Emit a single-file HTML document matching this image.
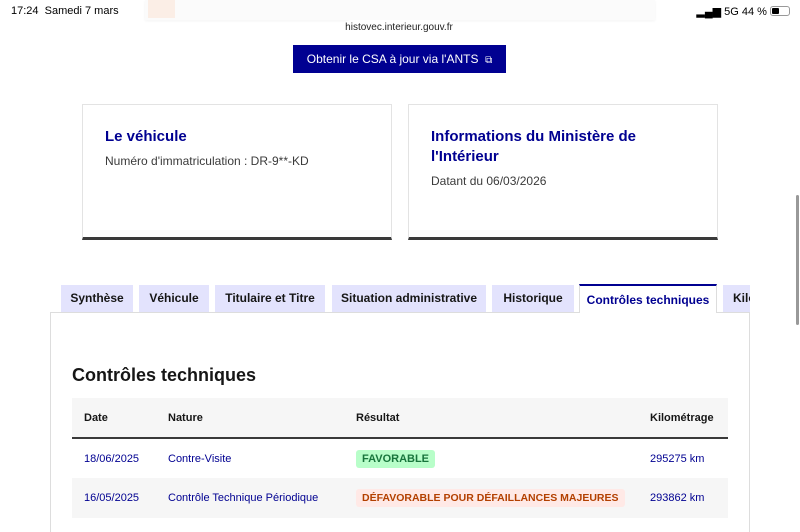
<!DOCTYPE html><html><head><meta charset="utf-8"><style>
body{margin:0;width:800px;height:525px;overflow:hidden;background:#fff;font-family:"Liberation Sans",sans-serif;position:relative;color:#161616}
.a{position:absolute}
.card{position:absolute;top:104px;height:136px;border:1px solid #e3e3e3;border-bottom:3px solid #3a3a3a;box-sizing:border-box;background:#fff}
.card h3{margin:0;position:absolute;left:22px;top:22px;color:#000091;font-size:15px;font-weight:bold;line-height:20px}
.card p{margin:0;position:absolute;left:22px;font-size:12px;color:#3a3a3a}
.tab{position:absolute;top:285px;height:27px;background:#e3e3fd;font-size:12px;font-weight:bold;line-height:27px;text-align:center;color:#161616}
.c{position:absolute;font-size:11px;white-space:nowrap;line-height:14px}
.h{font-weight:bold;color:#161616}
.v{color:#000091}
.b{font-weight:bold;padding:2px 6px;border-radius:3px;margin-top:-2px}
</style></head><body>
<div class="a" style="left:145px;top:0;width:510px;height:20px;background:#fbfbfb;box-shadow:0 1px 3px rgba(0,0,0,.05)"></div>
<div class="a" style="left:148px;top:0;width:27px;height:18px;background:#fbeee6"></div>
<div class="a" style="left:11px;top:5px;font-size:11px;color:#000">17:24&nbsp;&nbsp;Samedi 7 mars</div>
<div class="a" style="right:10px;top:5px;font-size:11px;color:#000">▂▄▆ 5G 44 % <span style="display:inline-block;width:18px;height:8px;border:1px solid #999;border-radius:3px;vertical-align:-1px;position:relative"><span style="position:absolute;left:1px;top:1px;width:7px;height:6px;background:#000;border-radius:1px"></span></span></div>
<div class="a" style="left:343px;top:20px;width:112px;height:16px;background:#fff;border-radius:8px;font-size:10px;line-height:16px;text-align:center;color:#222">histovec.interieur.gouv.fr</div>
<div class="a" style="left:293px;top:45px;width:213px;height:28px;background:#000091;color:#fff;font-size:12px;line-height:28px;text-align:center">Obtenir le CSA à jour via l'ANTS&nbsp; <span style="font-size:10px">⧉</span></div>
<div class="card" style="left:82px;width:310px"><h3>Le véhicule</h3><p style="top:49px">Numéro d'immatriculation : DR-9**-KD</p></div>
<div class="card" style="left:408px;width:310px"><h3>Informations du Ministère de<br>l'Intérieur</h3><p style="top:69px">Datant du 06/03/2026</p></div>
<div class="tab" style="left:61px;width:72px">Synthèse</div>
<div class="tab" style="left:139px;width:70px">Véhicule</div>
<div class="tab" style="left:215px;width:110px">Titulaire et Titre</div>
<div class="tab" style="left:332px;width:154px">Situation administrative</div>
<div class="tab" style="left:492px;width:82px">Historique</div>
<div class="tab" style="left:579px;width:138px;background:#fff;color:#000091;border-top:2px solid #000091;top:284px;height:29px;line-height:28px;border-left:1px solid #ddd;border-right:1px solid #ddd;box-sizing:border-box;z-index:2">Contrôles techniques</div>
<div class="tab" style="left:723px;width:27px;text-align:left;padding-left:10px;box-sizing:border-box;overflow:hidden">Kilo</div>
<div class="a" style="left:50px;top:312px;width:700px;height:220px;border:1px solid #ddd;box-sizing:border-box;border-bottom:0"></div>
<div class="a" style="left:72px;top:365px;font-size:18px;font-weight:bold;color:#161616">Contrôles techniques</div>
<div class="a" style="left:72px;top:398px;width:656px;height:39px;background:#f6f6f6;border-bottom:2px solid #3a3a3a"></div>
<div class="a" style="left:72px;top:478px;width:656px;height:40px;background:#f6f6f6"></div>
<div class="c h" style="left:84px;top:411px">Date</div>
<div class="c h" style="left:168px;top:411px">Nature</div>
<div class="c h" style="left:356px;top:411px">Résultat</div>
<div class="c h" style="left:650px;top:411px">Kilométrage</div>
<div class="c v" style="left:84px;top:452px">18/06/2025</div>
<div class="c v" style="left:168px;top:452px">Contre-Visite</div>
<div class="c b" style="left:356px;top:452px;background:#b8fec9;color:#18753c">FAVORABLE</div>
<div class="c v" style="left:650px;top:452px">295275 km</div>
<div class="c v" style="left:84px;top:491px">16/05/2025</div>
<div class="c v" style="left:168px;top:491px">Contrôle Technique Périodique</div>
<div class="c b" style="left:356px;top:491px;background:#ffe9e6;color:#b34000;font-size:10.5px">DÉFAVORABLE POUR DÉFAILLANCES MAJEURES</div>
<div class="c v" style="left:650px;top:491px">293862 km</div>
<div class="a" style="left:796px;top:195px;width:3px;height:130px;background:#999;border-radius:2px"></div>
</body></html>
